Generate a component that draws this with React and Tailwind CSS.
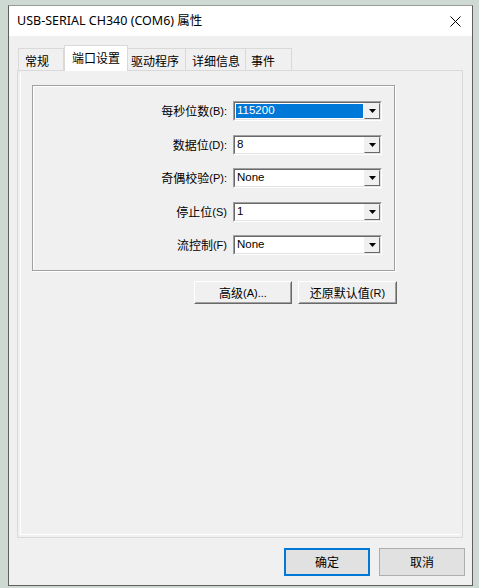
import React from "react";

const CJK = { fontFamily: '"Microsoft YaHei","Noto Sans CJK SC",sans-serif' };

function Lbl({ cjk, lat }) {
  return (
    <span className="inline-flex items-center whitespace-nowrap text-black leading-none">
      <span className="text-[12px] leading-[14px] font-['Noto_Sans_CJK_SC',sans-serif]">{cjk}</span>
      <span className="text-[11px] leading-[14px] font-['Liberation_Sans',sans-serif]">{lat}</span>
    </span>
  );
}

function Combo({ value, selected }) {
  return (
    <div className="w-[149px] h-[20px] border border-t-[#a0a0a0] border-l-[#a0a0a0] border-b-white border-r-white">
      <div className="h-full w-full border border-t-[#696969] border-l-[#696969] border-b-[#e3e3e3] border-r-[#e3e3e3] bg-white flex items-stretch">
        <div className="flex-1 flex items-center pl-[1px] py-[1px]">
          <div
            className={
              "h-full w-full flex items-center pl-[1px] text-[11.5px] font-['Liberation_Sans',sans-serif] " +
              (selected ? "bg-[#0078d7] text-white" : "text-black")
            }
          >
            {value}
          </div>
        </div>
        <div className="w-[16px] ml-[1px] border border-t-[#f0f0f0] border-l-[#f0f0f0] border-b-[#696969] border-r-[#696969] bg-[#f0f0f0] flex items-center justify-center">
          <svg width="7" height="4" viewBox="0 0 7 4">
            <path d="M0 0H7L3.5 4Z" fill="#000" />
          </svg>
        </div>
      </div>
    </div>
  );
}

function Row({ cjk, lat, value, selected }) {
  return (
    <div className="flex items-center h-[20px]">
      <div className="w-[194px] flex justify-end">
        <Lbl cjk={cjk} lat={lat} />
      </div>
      <div className="ml-[6px]">
        <Combo value={value} selected={selected} />
      </div>
    </div>
  );
}

function RaisedButton({ w, children }) {
  return (
    <div
      className="h-[23px] border border-t-white border-l-white border-b-[#696969] border-r-[#696969] bg-[#f0f0f0]"
      style={{ width: w }}
    >
      <div className="h-full w-full border border-t-[#f0f0f0] border-l-[#f0f0f0] border-b-[#a0a0a0] border-r-[#a0a0a0] flex items-center justify-center leading-none">
        {children}
      </div>
    </div>
  );
}

function Tab({ label, w, pl, active, first }) {
  if (active) {
    return (
      <div
        className="relative z-10 h-[26px] -mb-[1px] bg-white border-l border-t border-r border-[#d9d9d9] pt-[5px] text-[12px] leading-[14px] text-black"
        style={{ width: w, paddingLeft: pl, ...CJK }}
      >
        {label}
      </div>
    );
  }
  return (
    <div
      className={
        "h-[22px] bg-[#f0f0f0] border-t border-r border-[#d9d9d9] pt-[5px] text-[12px] leading-[14px] text-black " +
        (first ? "border-l" : "")
      }
      style={{ width: w, paddingLeft: pl, ...CJK }}
    >
      {label}
    </div>
  );
}

export default function App() {
  return (
    <div className="w-[479px] h-[588px] bg-[#cfd9d3] pt-[5px] pl-[8px] overflow-hidden">
      <div className="w-[465px] h-[581px] border border-[#5f5f5f] border-t-[#9a9a9a] bg-[#f0f0f0] flex flex-col">
        {/* Title bar */}
        <div className="h-[30px] bg-white flex items-center justify-between pl-[8px] pr-[10px]">
          <span className="text-[12.5px] text-black font-['Noto_Sans','Noto_Sans_CJK_SC',sans-serif]">
            USB-SERIAL CH340 (COM6) 属性
          </span>
          <svg width="11" height="11" viewBox="0 0 11 11" className="mr-[1px]">
            <path d="M0.5 0.5L10.5 10.5M10.5 0.5L0.5 10.5" stroke="#000" strokeWidth="1" />
          </svg>
        </div>

        {/* Body */}
        <div className="flex-1 pt-[9px] pl-[8px] pr-[9px] flex flex-col">
          <div className="flex items-end pl-[1px] h-[25px]">
            <Tab label="常规" w={46} pl={6} first />
            <Tab label="端口设置" w={64} pl={7} active />
            <Tab label="驱动程序" w={58} pl={3} />
            <Tab label="详细信息" w={60} pl={6} />
            <Tab label="事件" w={46} pl={5} />
          </div>

          <div className="h-[468px] border border-[#d9d9d9] bg-[#f0f0f0] p-[2px]">
            <div className="h-full border-l border-b border-white pl-[11px] pt-[12px]">
              {/* Group box */}
              <div className="w-[363px] h-[186px] border border-[#a0a0a0] shadow-[inset_1px_1px_0_#ffffff,1px_1px_0_#ffffff] pt-[15px] flex flex-col gap-[13.5px]">
                <Row cjk="每秒位数" lat="(B):" value="115200" selected />
                <Row cjk="数据位" lat="(D):" value="8" />
                <Row cjk="奇偶校验" lat="(P):" value="None" />
                <Row cjk="停止位" lat="(S)" value="1" />
                <Row cjk="流控制" lat="(F)" value="None" />
              </div>

              <div className="flex mt-[10px] ml-[162px] gap-[6px]">
                <RaisedButton w={98}>
                  <Lbl cjk="高级" lat="(A)..." />
                </RaisedButton>
                <RaisedButton w={99}>
                  <Lbl cjk="还原默认值" lat="(R)" />
                </RaisedButton>
              </div>
            </div>
          </div>

          <div className="flex justify-end gap-[9px] mt-[10px] mr-[-2px]">
            <div
              className="w-[86px] h-[28px] border-2 border-[#0078d7] bg-[#e1e1e1] flex items-center justify-center text-[12px] text-black"
              style={CJK}
            >
              确定
            </div>
            <div
              className="w-[86px] h-[28px] border border-[#adadad] bg-[#e1e1e1] flex items-center justify-center text-[12px] text-black"
              style={CJK}
            >
              取消
            </div>
          </div>
        </div>
      </div>
    </div>
  );
}
